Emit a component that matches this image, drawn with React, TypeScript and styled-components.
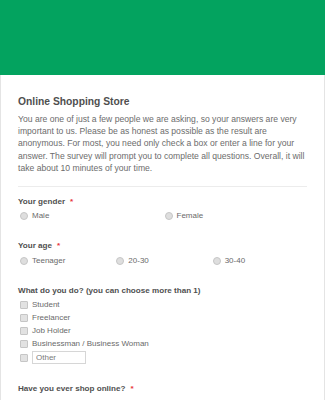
import React from 'react';
import styled, { createGlobalStyle } from 'styled-components';

const GlobalStyle = createGlobalStyle`
  html, body {
    margin: 0;
    padding: 0;
    background: #ffffff;
  }
  body {
    font-family: "Liberation Sans", Arial, sans-serif;
  }
`;

type Question = {
  label: string;
  required?: boolean;
  type: 'radio' | 'checkbox';
  columns?: number;
  options: string[];
  other?: boolean;
};

const questions: Question[] = [
  { label: 'Your gender', required: true, type: 'radio', columns: 2, options: ['Male', 'Female'] },
  { label: 'Your age', required: true, type: 'radio', columns: 3, options: ['Teenager', '20-30', '30-40'] },
  {
    label: 'What do you do? (you can choose more than 1)',
    type: 'checkbox',
    columns: 1,
    options: ['Student', 'Freelancer', 'Job Holder', 'Businessman / Business Woman'],
    other: true,
  },
  { label: 'Have you ever shop online?', required: true, type: 'radio', columns: 2, options: ['Yes', 'No'] },
];

const App: React.FC = () => {
  return (
    <Page>
      <GlobalStyle />
      <Header />
      <Card>
        <Title>Online Shopping Store</Title>
        <Description>
          You are one of just a few people we are asking, so your answers are very important to us. Please be as
          honest as possible as the result are anonymous. For most, you need only check a box or enter a line for your
          answer. The survey will prompt you to complete all questions. Overall, it will take about 10 minutes of your
          time.
        </Description>
        <Divider />
        {questions.map((q) => (
          <Section key={q.label}>
            <Label>
              {q.label}
              {q.required && <Star>*</Star>}
            </Label>
            <Options $columns={q.columns || 1}>
              {q.options.map((opt) => (
                <Option key={opt}>
                  {q.type === 'radio' ? <Radio /> : <Check />}
                  <OptionText>{opt}</OptionText>
                </Option>
              ))}
              {q.other && (
                <OtherRow>
                  <Check />
                  <OtherInput placeholder="Other" />
                </OtherRow>
              )}
            </Options>
          </Section>
        ))}
      </Card>
    </Page>
  );
};

const Page = styled.div`
  width: 325px;
  height: 400px;
  overflow: hidden;
  background: #ffffff;
`;

const Header = styled.div`
  height: 75px;
  background: #03a35f;
`;

const Card = styled.div`
  padding: 20px 17px 40px 17px;
  border-left: 1px solid #e4e4e4;
  border-right: 1px solid #e4e4e4;
  box-sizing: border-box;
`;

const Title = styled.h1`
  margin: 0;
  font-size: 10.3px;
  line-height: 13px;
  font-weight: bold;
  color: #4f4f4f;
`;

const Description = styled.p`
  margin: 4.5px 0 0 0;
  font-size: 8.6px;
  line-height: 12.4px;
  color: #6c6c6c;
`;

const Divider = styled.div`
  margin: 11px 0 9px 0;
  border-top: 1px solid #ececec;
`;

const Section = styled.div`
  margin-bottom: 18px;
`;

const Label = styled.div`
  font-size: 8.1px;
  line-height: 12px;
  font-weight: bold;
  color: #505050;
`;

const Star = styled.span`
  color: #e8383b;
  margin-left: 5px;
`;

const Options = styled.div<{ $columns: number }>`
  display: grid;
  grid-template-columns: repeat(${(p) => p.$columns}, 1fr);
  margin-top: 1.5px;
`;

const Option = styled.div`
  display: flex;
  align-items: center;
  height: 13px;
  padding-left: 2px;
`;

const OtherRow = styled(Option)`
  height: 15px;
`;

const Radio = styled.span`
  width: 6px;
  height: 6px;
  margin-top: 1px;
  border-radius: 50%;
  border: 1px solid #c6c6c6;
  background: #dedede;
  flex-shrink: 0;
`;

const Check = styled.span`
  width: 6px;
  height: 6px;
  border-radius: 1px;
  border: 1px solid #c6c6c6;
  background: #e2e2e2;
  flex-shrink: 0;
`;

const OptionText = styled.span`
  margin-left: 4px;
  font-size: 8px;
  color: #6a6a6a;
`;

const OtherInput = styled.input`
  margin-left: 4px;
  width: 54px;
  height: 13px;
  box-sizing: border-box;
  border: 1px solid #d6d6d6;
  padding: 0 3px;
  font-family: "Liberation Sans", Arial, sans-serif;
  font-size: 8px;
  color: #6a6a6a;
  outline: none;

  &::placeholder {
    color: #7a7a7a;
  }
`;

export default App;
